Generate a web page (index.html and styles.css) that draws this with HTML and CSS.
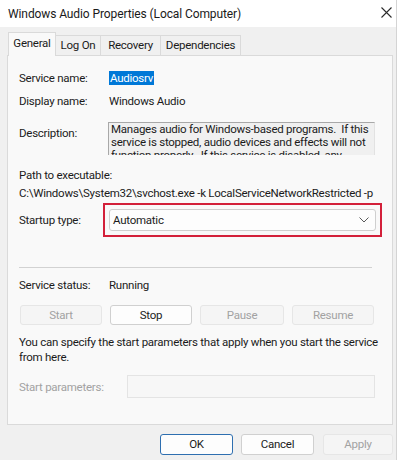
FILE: index.html
```html
<!DOCTYPE html>
<html>
<head>
<meta charset="utf-8">
<title>Windows Audio Properties</title>
<link rel="stylesheet" href="styles.css">
</head>
<body>
<div class="window">
  <div class="titlebar">
    <span class="title">Windows Audio Properties (Local Computer)</span>
    <svg class="close" width="11" height="11" viewBox="0 0 11 11"><path d="M0.5 0.5L10.5 10.5M10.5 0.5L0.5 10.5" stroke="#2b2b2b" stroke-width="1.1" fill="none"/></svg>
  </div>
  <div class="client">
    <div class="tabs">
      <div class="tab active t-general">General</div>
      <div class="tab t-logon">Log On</div>
      <div class="tab t-recovery">Recovery</div>
      <div class="tab t-deps">Dependencies</div>
    </div>
    <div class="panel">
      <div class="row r-name"><span class="label">Service name:</span><span class="sel">Audiosrv</span></div>
      <div class="row r-display"><span class="label">Display name:</span><span>Windows Audio</span></div>
      <div class="row r-desc"><span class="label desc-label">Description:</span>
        <div class="descbox">Manages audio for Windows-based programs.&nbsp; If this service is stopped, audio devices and effects will not function properly.&nbsp; If this service is disabled, any services that explicitly depend on it will fail to start</div>
      </div>
      <div class="line r-pathlabel">Path to executable:</div>
      <div class="line r-path">C:\Windows\System32\svchost.exe -k LocalServiceNetworkRestricted -p</div>
      <div class="row r-startup"><span class="label">Startup type:</span>
        <div class="mark">
          <div class="combo"><span>Automatic</span>
            <svg class="chev" width="10" height="6" viewBox="0 0 10 6"><path d="M0.5 0.5L5 5L9.5 0.5" stroke="#5a5a5a" stroke-width="1" fill="none"/></svg>
          </div>
        </div>
      </div>
      <div class="sep"></div>
      <div class="row r-status"><span class="label">Service status:</span><span>Running</span></div>
      <div class="btnrow">
        <div class="btn disabled b1">Start</div>
        <div class="btn b2">Stop</div>
        <div class="btn disabled b3">Pause</div>
        <div class="btn disabled b4">Resume</div>
      </div>
      <div class="para">You can specify the start parameters that apply when you start the service from here.</div>
      <div class="row r-params"><span class="label plabel">Start parameters:</span><div class="pinput"></div></div>
    </div>
    <div class="footer">
      <div class="btn fbtn default">OK</div>
      <div class="btn fbtn cancel">Cancel</div>
      <div class="btn fbtn disabled apply">Apply</div>
    </div>
  </div>
</div>
</body>
</html>
```
FILE: styles.css
```css
html, body {
  margin: 0;
  padding: 0;
}
body {
  width: 400px;
  height: 460px;
  background: #ffffff;
  font-family: Roboto, "Liberation Sans", Arial, sans-serif;
  font-size: 11.5px;
  letter-spacing: -0.25px;
  color: #1b1b1b;
  overflow: hidden;
}
.window {
  width: 396px;
  height: 460px;
  border-right: 1px solid #d4d4d4;
  background: #f0f0f0;
}
.titlebar {
  height: 27px;
  background: #ffffff;
  display: flex;
  align-items: center;
  justify-content: space-between;
  padding: 0 4px 0 8px;
}
.title {
  font-size: 12px;
  letter-spacing: -0.1px;
  color: #1a1a1a;
}
.close {
  display: block;
  margin-top: -2px;
}
.client {
  padding: 0 3px 0 7px;
}
.tabs {
  display: flex;
  align-items: flex-end;
  height: 22px;
  margin-top: 6px;
  position: relative;
  z-index: 1;
}
.tab {
  box-sizing: border-box;
  height: 20px;
  line-height: 19px;
  text-align: center;
  border: 1px solid #dadada;
  border-bottom: none;
  background: #f0f0f0;
  margin-left: -1px;
}
.tab.active {
  height: 24px;
  line-height: 21px;
  margin-bottom: -1px;
  margin-left: 1px;
  background: #f9f9f9;
}
.t-general { width: 48px; }
.t-logon { width: 46px; }
.t-recovery { width: 61px; }
.t-deps { width: 81px; }
.panel {
  box-sizing: border-box;
  width: 386px;
  height: 370px;
  border: 1px solid #dadada;
  background: #f9f9f9;
  padding: 0 0 0 11px;
  display: flex;
  flex-direction: column;
}
.row {
  display: flex;
  align-items: flex-start;
  line-height: 16px;
}
.label {
  width: 90px;
  flex: none;
}
.r-name { margin-top: 14px; }
.sel {
  background: #0078d7;
  color: #ffffff;
  padding: 0 1px;
  line-height: 14px;
  margin-top: 1px;
}
.r-display { margin-top: 7px; }
.r-desc { margin-top: 13px; }
.desc-label { padding-top: 3px; }
.descbox {
  box-sizing: border-box;
  width: 267px;
  height: 33px;
  margin-left: -1px;
  border-top: 1px solid #a8a8a8;
  border-left: 1px solid #a8a8a8;
  border-right: 1px solid #e2e2e2;
  background: #f0f0f0;
  padding: 0 2px 0 2px;
  line-height: 13px;
  overflow: hidden;
}
.line { line-height: 16px; white-space: nowrap; }
.r-pathlabel { margin-top: 12px; }
.r-path { margin-top: 2px; }
.r-startup {
  margin-top: 2px;
  align-items: center;
}
.r-startup .label { margin-right: -6px; }
.mark {
  border: 2px solid #d3203a;
  padding: 4px;
}
.combo {
  box-sizing: border-box;
  width: 267px;
  height: 22px;
  border: 1px solid #cfcfcf;
  border-radius: 3px;
  background: #fdfdfd;
  display: flex;
  align-items: center;
  justify-content: space-between;
  padding: 0 6px 0 3px;
}
.chev { display: block; }
.sep {
  margin-top: 30px;
  width: 353px;
  height: 1px;
  background: #d2d2d2;
}
.r-status { margin-top: 9px; }
.btnrow {
  display: flex;
  gap: 8px;
  margin-top: 12px;
  margin-left: 1px;
}
.btn {
  box-sizing: border-box;
  height: 20px;
  line-height: 18px;
  text-align: center;
  border: 1px solid #d0d0d0;
  border-radius: 3px;
  background: #fdfdfd;
  color: #1b1b1b;
}
.btn.disabled {
  background: #f5f5f5;
  border-color: #e6e6e6;
  color: #a2a2a2;
}
.b1, .b2, .b4 { width: 82px; }
.b3 { width: 84px; }
.para {
  margin-top: 10px;
  line-height: 15px;
  width: 372px;
}
.r-params {
  margin-top: 10px;
  align-items: center;
}
.plabel {
  width: 108px;
  color: #a2a2a2;
}
.pinput {
  box-sizing: border-box;
  width: 248px;
  height: 23px;
  border: 1px solid #e4e4e4;
  background: #f7f7f7;
}
.footer {
  display: flex;
  justify-content: flex-end;
  gap: 8px;
  margin-top: 9px;
}
.fbtn {
  height: 21px;
  line-height: 19px;
}
.default {
  width: 73px;
  border-color: #2e6fb0;
}
.cancel { width: 73px; margin-right: 1px; }
.apply { width: 70px; border-color: #f0f0f0; }
```
